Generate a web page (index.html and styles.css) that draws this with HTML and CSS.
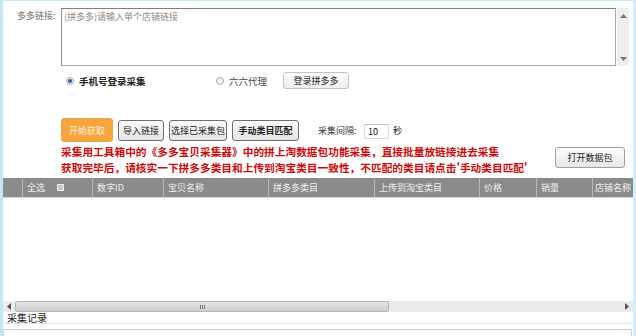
FILE: index.html
```html
<!DOCTYPE html>
<html lang="zh">
<head>
<meta charset="utf-8">
<link rel="stylesheet" href="styles.css">
</head>
<body>
<div class="win">
  <div class="link-row">
    <span class="lbl">多多链接:</span>
    <div class="ta">(拼多多)请输入单个店铺链接</div>
    <div class="vscroll">
      <svg class="arr" width="7" height="4" viewBox="0 0 7 4"><path d="M0 4 L3.5 0 L7 4 Z" fill="#777"/></svg>
      <svg class="arr" width="7" height="4" viewBox="0 0 7 4"><path d="M0 0 L3.5 4 L7 0 Z" fill="#777"/></svg>
    </div>
  </div>

  <div class="radio-row">
    <label class="rgroup g1"><span class="radio on"></span><span class="rtext">手机号登录采集</span></label>
    <label class="rgroup g2"><span class="radio"></span><span class="rtext light">六六代理</span></label>
    <button class="btn login">登录拼多多</button>
  </div>

  <div class="btn-row">
    <button class="btn orange">开始获取</button>
    <button class="btn b-import">导入链接</button>
    <button class="btn b-pack">选择已采集包</button>
    <button class="btn b-match">手动类目匹配</button>
    <span class="interval">采集间隔:</span>
    <span class="num">10</span>
    <span class="sec">秒</span>
  </div>

  <div class="notice-row">
    <div class="notice">
      <p>采集用工具箱中的《多多宝贝采集器》中的拼上淘数据包功能采集，直接批量放链接进去采集</p>
      <p>获取完毕后，请核实一下拼多多类目和上传到淘宝类目一致性，不匹配的类目请点击'手动类目匹配'</p>
    </div>
    <button class="btn open">打开数据包</button>
  </div>

  <div class="grid">
    <div class="thead">
      <div class="th c0"></div>
      <div class="th c1">全选<span class="chk"></span></div>
      <div class="th c2">数字ID</div>
      <div class="th c3">宝贝名称</div>
      <div class="th c4">拼多多类目</div>
      <div class="th c5">上传到淘宝类目</div>
      <div class="th c6">价格</div>
      <div class="th c7">销量</div>
      <div class="th c8">店铺名称</div>
    </div>
    <div class="tbody"></div>
    <div class="hscroll">
      <div class="harr"><svg width="4" height="7" viewBox="0 0 4 7"><path d="M4 0 L0 3.5 L4 7 Z" fill="#555"/></svg></div>
      <div class="thumb"><span class="grip"></span></div>
      <div class="track"></div>
      <div class="harr"><svg width="4" height="7" viewBox="0 0 4 7"><path d="M0 0 L4 3.5 L0 7 Z" fill="#555"/></svg></div>
    </div>
  </div>

  <div class="log-label">采集记录</div>
  <div class="log"></div>
</div>
</body>
</html>
```

FILE: styles.css
```css
* { box-sizing: border-box; }
html, body { margin: 0; padding: 0; background: #fff; }
body {
  font-family: "Noto Sans CJK SC", "Liberation Sans", sans-serif;
  font-size: 9px;
  color: #333;
}
.win {
  width: 636px;
  height: 336px;
  overflow: hidden;
  border-left: 3px solid #bfe7f4;
  border-right: 3px solid #d4eff8;
  border-top: 1px solid #c6eaf6;
  background: #fff;
}
.link-row {
  display: flex;
  align-items: flex-start;
  padding-top: 7px;
  padding-left: 14px;
  height: 65px;
}
.lbl {
  width: 44px;
  color: #6f6f6f;
  line-height: 14px;
  padding-top: 1px;
  white-space: nowrap;
}
.ta {
  width: 555px;
  height: 58px;
  border: 1px solid #a7a7a7;
  border-top-color: #7f7f7f;
  border-left-color: #929292;
  color: #8a8a8a;
  padding: 1px 2px;
  line-height: 14px;
}
.vscroll {
  margin-left: 1px;
  width: 12px;
  height: 58px;
  background: #eeeeee;
  display: flex;
  flex-direction: column;
  justify-content: space-between;
  align-items: center;
  padding: 6px 0 5px;
}
.arr { display: block; }

.radio-row {
  display: flex;
  align-items: center;
  height: 17px;
  margin-top: 6px;
  padding-left: 63px;
}
.rgroup { display: flex; align-items: center; white-space: nowrap; }
.g1 { width: 150px; }
.g2 { width: 67px; }
.radio {
  width: 8px;
  height: 8px;
  border-radius: 50%;
  border: 1px solid #a9a9a9;
  background: #f1f1f1;
  position: relative;
  flex: none;
}
.radio.on::after {
  content: "";
  position: absolute;
  left: 1px; top: 1px;
  width: 4px; height: 4px;
  border-radius: 50%;
  background: #2a5ea8;
}
.rtext { margin-left: 5px; color: #222; font-weight: bold; font-size: 9.5px; }
.rtext.light { font-weight: normal; color: #444; }

.btn {
  font-family: inherit;
  font-size: 9px;
  color: #222;
  border: 1px solid #a8a8a8;
  border-radius: 3px;
  background: linear-gradient(#fbfbfb, #e4e4e4);
  padding: 0;
  margin: 0;
  line-height: 1;
  white-space: nowrap;
  display: flex;
  align-items: center;
  justify-content: center;
}
.login { width: 66px; height: 17px; background: linear-gradient(#fdfdfd, #efefef); border-color: #c4c4c4; }

.btn-row {
  display: flex;
  align-items: center;
  margin-top: 29px;
  height: 24px;
  padding-left: 58px;
  white-space: nowrap;
}
.btn-row .btn { height: 21px; margin-right: 5px; border-color: #6f6f6f; }
.btn-row .btn.orange {
  height: 24px;
  width: 52px;
  background: #f8a53e;
  border: 1px solid #f2a443;
  color: #fff4df;
}
.b-import { width: 46px; }
.b-pack { width: 58px; }
.b-match { width: 67px; font-weight: bold; }
.interval { margin-left: 14px; color: #333; width: 46px; }
.num {
  width: 25px;
  height: 15px;
  border: 1px solid #dcdcdc;
  border-top-color: #bdbdbd;
  padding-left: 3px;
  line-height: 13px;
  color: #111;
  margin-top: 2px;
}
.sec { margin-left: 4px; color: #222; }

.notice-row {
  display: flex;
  align-items: flex-start;
  margin-top: 2px;
  padding-left: 58px;
  padding-right: 8px;
  height: 32px;
}
.notice { flex: 1; }
.notice p {
  margin: 0;
  color: #cc0b0b;
  font-weight: bold;
  font-size: 10.7px;
  line-height: 16px;
  white-space: nowrap;
}
.btn.open {
  margin-top: 3px;
  width: 70px;
  height: 21px;
  border-color: #a0a0a0;
  background: linear-gradient(#fefefe, #e6e6e6);
}

.grid { margin-top: 2px; }
.thead {
  display: flex;
  height: 20px;
  background: #8b8b8b;
  border-bottom: 1px solid #d8d8d8;
}
.th {
  height: 100%;
  color: #efefef;
  padding-left: 4px;
  display: flex;
  align-items: center;
  border-left: 1px solid #b9b9b9;
  white-space: nowrap;
  overflow: hidden;
}
.c0 { width: 19px; border-left: none; }
.c1 { width: 70px; }
.c2 { width: 71px; }
.c3 { width: 105px; }
.c4 { width: 106px; }
.c5 { width: 105px; }
.c6 { width: 57px; }
.c7 { width: 56px; }
.c8 { flex: 1; padding-left: 2px; }
.chk {
  display: inline-block;
  width: 7px;
  height: 7px;
  margin-left: 12px;
  background: #c8c8c8;
  border: 1px solid #eee;
}
.tbody { height: 103px; background: #fff; }
.hscroll {
  display: flex;
  height: 11px;
  background: #ececec;
}
.harr {
  width: 12px;
  display: flex;
  align-items: center;
  justify-content: center;
}
.thumb {
  width: 374px;
  background: linear-gradient(#e6e6e6, #cfcfcf);
  border: 1px solid #b5b5b5;
  border-radius: 2px;
  display: flex;
  align-items: center;
  justify-content: center;
}
.grip {
  width: 5px;
  height: 4px;
  border-left: 1px solid #777;
  border-right: 1px solid #777;
  position: relative;
}
.grip::after {
  content: "";
  position: absolute;
  left: 1px;
  top: 0;
  width: 1px;
  height: 4px;
  background: #777;
}
.track { flex: 1; }

.log-label {
  height: 12px;
  line-height: 12px;
  padding-left: 4px;
  color: #222;
  font-size: 10px;
  border-bottom: 1px solid #e4e4e4;
}
.log {
  margin-top: 5px;
  height: 20px;
  border: 1px solid #cfcfcf;
  margin-right: 1px;
}
```
